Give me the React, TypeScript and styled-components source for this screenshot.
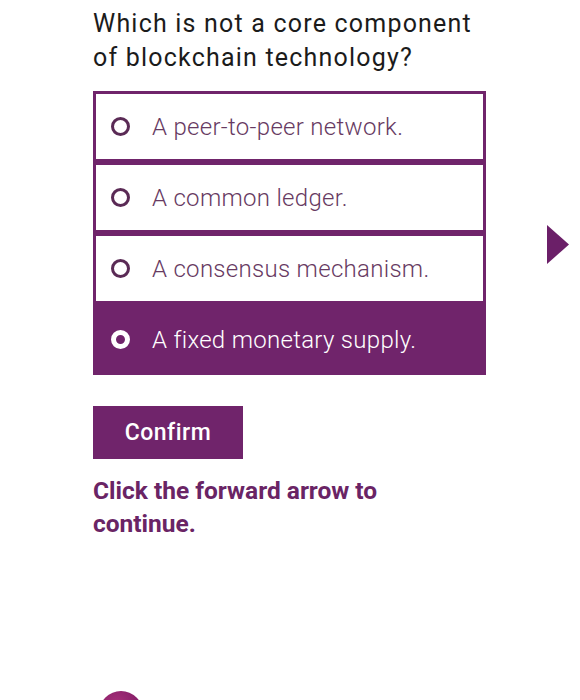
import React, { useState } from 'react';
import styled, { createGlobalStyle, css } from 'styled-components';

const PURPLE = '#70246b';

const GlobalStyle = createGlobalStyle`
  html, body {
    margin: 0;
    padding: 0;
    background: #ffffff;
    overflow: hidden;
  }
  body {
    font-family: Roboto, "Liberation Sans", Arial, sans-serif;
  }
`;

const Page = styled.div`
  display: flex;
  flex-direction: column;
  padding: 7px 0 0 93px;
  height: 700px;
  box-sizing: border-box;
`;

const Row = styled.div`
  display: flex;
  align-items: flex-start;
`;

const Main = styled.div`
  width: 393px;
  display: flex;
  flex-direction: column;
`;

const Question = styled.h1`
  margin: 0;
  font-size: 25px;
  line-height: 34px;
  font-weight: 400;
  letter-spacing: 1.2px;
  color: #1b1b1b;
  white-space: nowrap;
`;

const Options = styled.div`
  margin-top: 16px;
  display: flex;
  flex-direction: column;
`;

const Option = styled.button<{ $selected: boolean }>`
  display: flex;
  align-items: center;
  gap: 22px;
  height: 71px;
  box-sizing: border-box;
  padding: 0 0 0 15px;
  border: 3px solid ${PURPLE};
  background: ${(p) => (p.$selected ? PURPLE : '#ffffff')};
  color: ${(p) => (p.$selected ? '#ffffff' : '#673a62')};
  font-family: Roboto, "Liberation Sans", Arial, sans-serif;
  font-size: 24px;
  font-weight: 300;
  letter-spacing: 0.3px;
  text-align: left;
  cursor: pointer;
`;

const Radio = styled.span<{ $selected: boolean }>`
  width: 19px;
  height: 19px;
  box-sizing: border-box;
  border-radius: 50%;
  flex-shrink: 0;
  ${(p) =>
    p.$selected
      ? css`
          border: 5px solid #ffffff;
          background: ${PURPLE};
        `
      : css`
          border: 3.5px solid #5a2a55;
          background: #ffffff;
        `}
`;

const Confirm = styled.button`
  margin-top: 31px;
  width: 150px;
  height: 53px;
  border: none;
  background: ${PURPLE};
  color: #ffffff;
  font-family: Roboto, "Liberation Sans", Arial, sans-serif;
  font-size: 23px;
  font-weight: 500;
  letter-spacing: 0.5px;
  cursor: pointer;
`;

const Hint = styled.p`
  margin: 15px 0 0;
  font-size: 24.5px;
  line-height: 33px;
  font-weight: 700;
  color: #6a2465;
  white-space: nowrap;
`;

const NextArrow = styled.button`
  margin: 218px 0 0 61px;
  padding: 0;
  border: none;
  background: none;
  cursor: pointer;
  display: flex;
`;

const Footer = styled.div`
  margin-top: 151px;
  display: flex;
  align-items: flex-start;
  gap: 14px;
  padding-left: 6px;
`;

const LogoMark = styled.div`
  width: 44px;
  height: 44px;
  border-radius: 50%;
  background: radial-gradient(circle at 40% 30%, #a8307a, #7d1a63 70%);
`;

const LogoText = styled.span`
  padding-top: 6px;
  font-size: 22px;
  color: #d6cfd5;
  letter-spacing: 2px;
`;

const answers = [
  'A peer-to-peer network.',
  'A common ledger.',
  'A consensus mechanism.',
  'A fixed monetary supply.',
];

export default function App() {
  const [selected, setSelected] = useState(3);

  return (
    <>
      <GlobalStyle />
      <Page>
        <Row>
          <Main>
            <Question>
              Which is not a core component
              <br />
              of blockchain technology?
            </Question>
            <Options>
              {answers.map((a, i) => (
                <Option key={a} $selected={selected === i} onClick={() => setSelected(i)}>
                  <Radio $selected={selected === i} />
                  {a}
                </Option>
              ))}
            </Options>
            <Confirm>Confirm</Confirm>
            <Hint>
              Click the forward arrow to
              <br />
              continue.
            </Hint>
          </Main>
          <NextArrow aria-label="Next">
            <svg width="22" height="39" viewBox="0 0 22 39">
              <path d="M0 0 L22 19.5 L0 39 Z" fill="#6b1f68" />
            </svg>
          </NextArrow>
        </Row>
        <Footer>
          <LogoMark />
          <LogoText>Academy</LogoText>
        </Footer>
      </Page>
    </>
  );
}
